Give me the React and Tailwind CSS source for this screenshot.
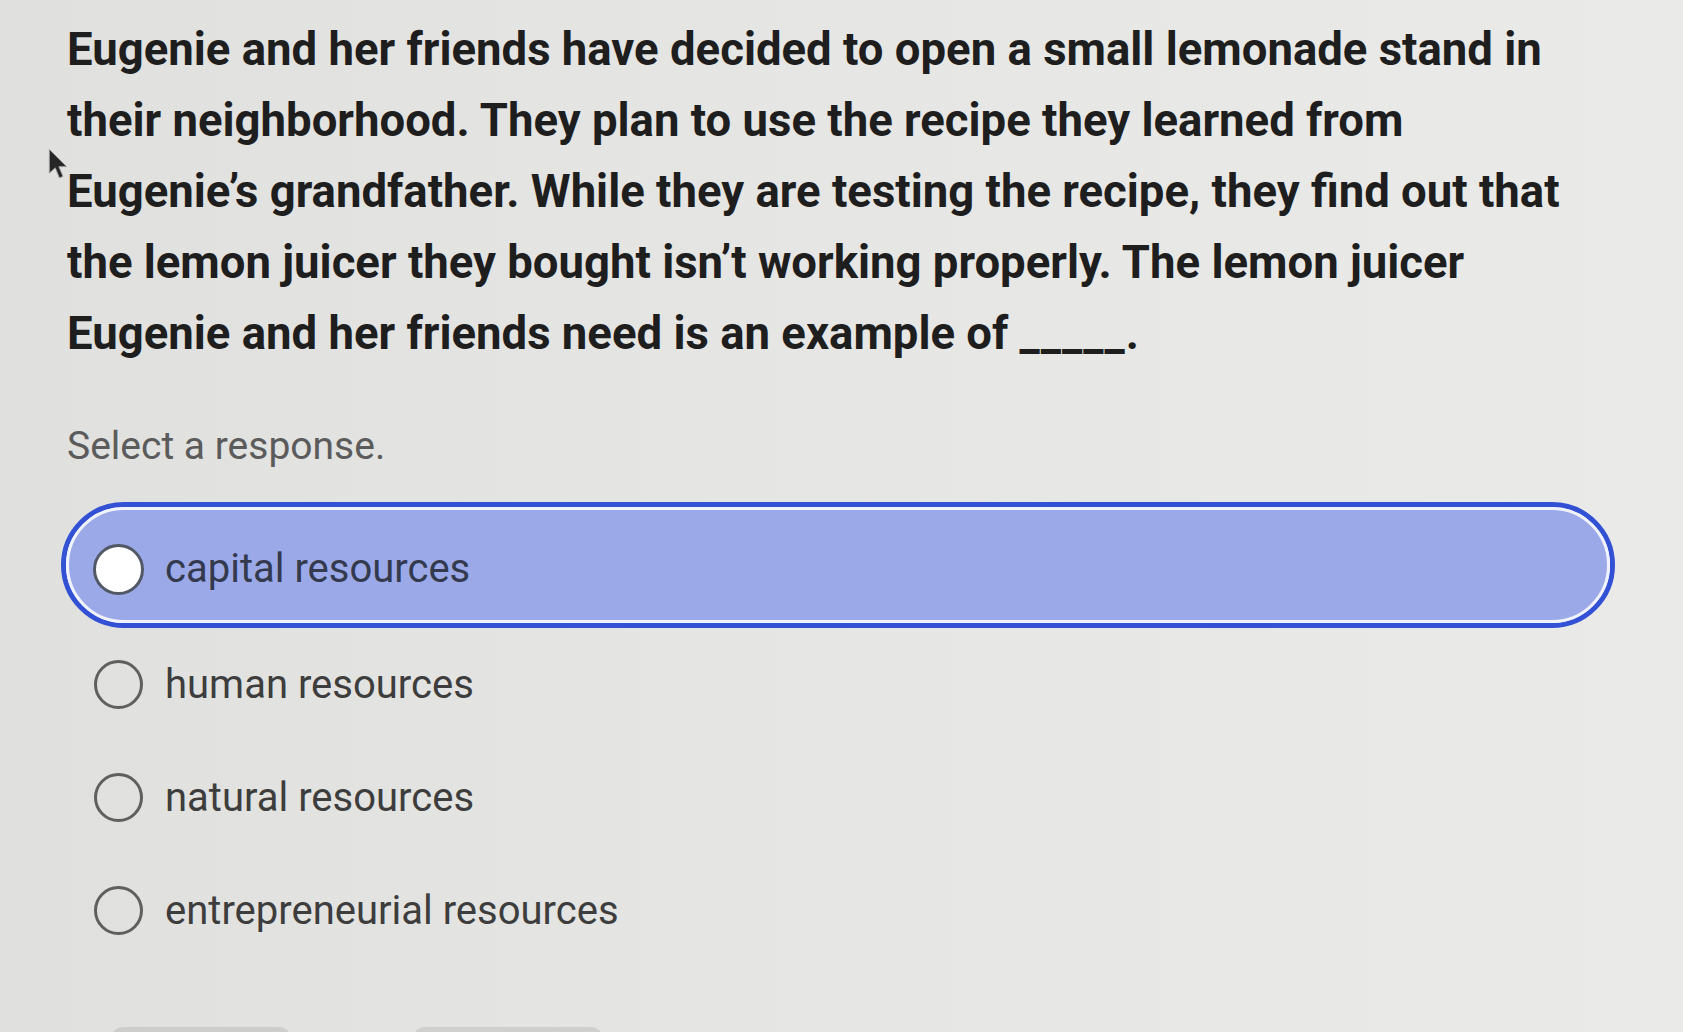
import React from "react";

const lines = [
  "Eugenie and her friends have decided to open a small lemonade stand in",
  "their neighborhood. They plan to use the recipe they learned from",
  "Eugenie\u2019s grandfather. While they are testing the recipe, they find out that",
  "the lemon juicer they bought isn\u2019t working properly. The lemon juicer",
];

const others = ["human resources", "natural resources", "entrepreneurial resources"];

export default function App() {
  return (
    <div className="relative h-screen w-full overflow-hidden bg-linear-to-r from-[#e0e0de] via-[#e6e6e4] to-[#eaeae8] font-['Roboto',sans-serif]">
      {/* cursor */}
      <svg className="absolute left-[47px] top-[147px]" width="26" height="38" viewBox="0 0 22 32">
        <path d="M2 2 L2 22 L7 17.5 L10.5 26 L13.5 24.8 L10 16.5 L16.5 16.5 Z" fill="#262626" stroke="#9a9a9a" strokeWidth="0.8" />
      </svg>

      <div className="pl-[67px] pt-[14px]">
        <div className="text-[45.5px] font-bold leading-[71px] text-[#1e1e1e]">
          {lines.map((l) => (
            <div key={l} className="whitespace-nowrap">{l}</div>
          ))}
          <div className="whitespace-nowrap">
            Eugenie and her friends need is an example of{" "}
            <span className="tracking-[1px]">_____</span>.
          </div>
        </div>
        <div className="mt-[55px] text-[39px] leading-[44px] text-[#5b5b5b]">
          Select a response.
        </div>
      </div>

      <div className="ml-[61px] mt-[34px] flex w-[1554px] flex-col">
        <div className="h-[126px] rounded-full border-[5px] border-[#3251d5] bg-[#f2f3fb]">
          <div className="flex h-full items-center gap-[21px] rounded-full border-[3px] border-[#f1f3fc] bg-[#9ba9e9] pl-[24px] pt-[8px]">
            <div className="h-[51px] w-[51px] shrink-0 rounded-full border-[3px] border-[#525866] bg-white" />
            <span className="text-[40px] leading-none text-[#343a4e]">capital resources</span>
          </div>
        </div>
        {others.map((o) => (
          <div key={o} className="flex h-[113px] items-center gap-[22px] pl-[33px]">
            <div className="h-[49px] w-[49px] shrink-0 rounded-full border-[3px] border-[#5f5f5f]" />
            <span className="text-[40px] leading-none text-[#3d3d3d]">{o}</span>
          </div>
        ))}
      </div>

      <div className="ml-[110px] mt-[60px] flex gap-[120px]">
        <div className="h-[40px] w-[182px] rounded-[14px] bg-[#cdcdcc]" />
        <div className="h-[40px] w-[192px] rounded-[14px] bg-[#cfcfce]" />
      </div>
    </div>
  );
}
